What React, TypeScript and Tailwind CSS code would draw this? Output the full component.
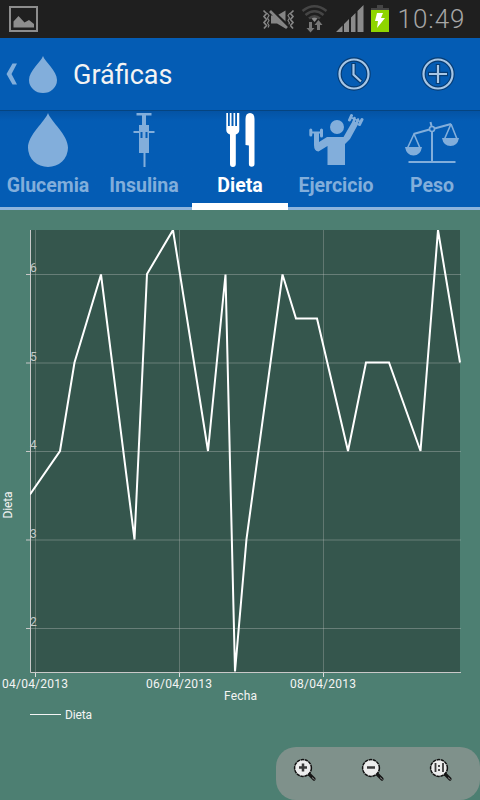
const DROP = "M20 0 C17 9 0 22 0 35.5 A20 19.5 0 0 0 40 35.5 C40 22 23 9 20 0Z";

function Drop({ className }: { className: string }) {
  return (
    <svg viewBox="0 0 40 55" preserveAspectRatio="none" className={className} fill="#82aedb">
      <path d={DROP} />
    </svg>
  );
}

function StatusBar() {
  return (
    <div className="flex h-[38px] shrink-0 items-center bg-[#1f1f1f]">
      <svg width="480" height="38" viewBox="0 0 480 38">
        <rect x="10" y="7" width="27" height="24" fill="none" stroke="#8d8d8d" strokeWidth="2" />
        <path d="M13.500 27.500V21.500L18.500 16L24.500 22.500L29 20L34 24V27.500Z" fill="#8d8d8d" />
        {/* vibrate */}
        <g fill="none" stroke="#858585" strokeWidth="1.700">
          <path d="M263.500 10.500l3 3-2.500 3 2.500 3-2.500 3 2.500 3-2.500 3M293.500 10.500l-3 3 2.500 3-2.500 3 2.500 3-2.500 3 2.500 3" />
          <path d="M267 13l2 2.500-1.500 2.500 1.500 2.500-1.500 2.500 1.500 2.500-1 2M290 13l-2 2.500 1.500 2.500-1.500 2.500 1.500 2.500-1.500 2.500 1 2" strokeWidth="1.200" />
        </g>
        <path d="M271 15.500h6l8.500-5v18l-8.500-5h-6z" fill="#858585" />
        <path d="M270 9.500L289 27.500" stroke="#1f1f1f" strokeWidth="4" />
        <path d="M270 11L287 28" stroke="#858585" strokeWidth="2.600" />
        {/* wifi */}
        <g fill="none" stroke="#454545" strokeWidth="2.600">
          <path d="M302.500 11Q314.500 1.500 326.500 11M305.500 15Q314.500 7.500 323.500 15" />
          <path d="M309 18.500Q314.500 14 320 18.500" />
        </g>
        <path d="M311.500 18.500Q314.500 16.500 317.500 18.500L314.500 22z" fill="#8b8b8b" />
        <path d="M309 22h3v6h2.500l-4 4.500-4-4.500H309zM317 30V25h-2.500l4-5 4 5H320v5z" fill="#777" />
        {/* signal */}
        <path d="M336 32L342.500 25.500V32zM344 32V24L349 19V32zM351 32V17.500L355.500 13V32zM357.500 32V11L363.500 5V32z" fill="#8b8b8b" />
        <rect x="377" y="5" width="6" height="3" fill="#454545" />
        <rect x="371" y="8" width="18" height="2" fill="#454545" />
        <rect x="371" y="10" width="18" height="22" fill="#8fd500" />
        <path d="M377 13h6l-2 5h4l-8 10 1-7h-3z" fill="#fff" />
        <text x="397.500" y="27.500" fontSize="26" textLength="67" fill="#a6a6a6" fontFamily="Roboto, sans-serif" fontWeight="300">10:49</text>
      </svg>
    </div>
  );
}

function ActionBar() {
  return (
    <header className="flex h-[72px] shrink-0 items-center bg-[#045cb4] pl-1.5">
      <svg width="12" height="24" viewBox="0 0 12 24" fill="#82aedb">
        <path d="M6.500 1.500h4.500L5.500 12l5.500 10.500H6.500L.5 12z" />
      </svg>
      <Drop className="ml-[11px] h-[37px] w-7" />
      <h1 className="ml-4 w-[101px] pt-0.5 text-[27px] leading-none text-[#f3f3f3]">Gráficas</h1>
      <svg width="34" height="34" viewBox="0 0 34 34" fill="none" className="ml-[163px]">
        <g stroke="#073c73" strokeWidth="4.500">
          <circle cx="17" cy="17" r="14.500" />
          <path d="M16.500 6v12l8 7" />
        </g>
        <g stroke="#a6c6e6" strokeWidth="2.200">
          <circle cx="17" cy="17" r="14.500" />
          <path d="M16.500 7v10.500l7.500 7" />
        </g>
      </svg>
      <svg width="34" height="34" viewBox="0 0 34 34" fill="none" className="ml-[50px]">
        <g stroke="#073c73" strokeWidth="4.500">
          <circle cx="17" cy="17" r="14.500" />
          <path d="M17 7v20M7 17h20" />
        </g>
        <g stroke="#a6c6e6" strokeWidth="2.200">
          <circle cx="17" cy="17" r="14.500" />
          <path d="M17 8v18M8 17h18" />
        </g>
      </svg>
    </header>
  );
}

function Syringe() {
  return (
    <svg width="22" height="54" viewBox="0 0 22 54" fill="#82aedb">
      <path fillRule="evenodd" d="M3.500 0h15v2.500H13V12h3v6h5.500v2H16v20h-3.500v14h-2V40H6V20H.5v-2H6v-6h3V2.500H3.500zM7.500 19v6h2v-6zM12.500 19v6h2v-6z" />
    </svg>
  );
}

function Cutlery() {
  return (
    <svg width="29" height="54" viewBox="0 0 29 54" fill="#fff">
      <path d="M.3 0H2v13h1.800V0h1.700v13h2V0h1.700v13H11V0h2.300v17q0 3-3.500 4.500V51a2.900 2.900 0 0 1-5.800 0V21.500Q.3 20 .3 17z" />
      <path d="M19.500 32V6Q19.500 0 24 0T28.500 6V51a2.800 2.800 0 0 1-5.600 0V32.500z" />
    </svg>
  );
}

function Lifter() {
  return (
    <svg width="55" height="54" viewBox="0 0 55 54" fill="#82aedb">
      <circle cx="28" cy="14" r="7" />
      <path d="M18.500 52V33L9.500 38.500Q5 38 5 32V20H10V29L18 24H34.500L44 7.500 49.500 10.500 41 26 36 31V52z" />
      <g fill="none" stroke="#82aedb" strokeLinecap="round">
        <path d="M1.800 17v5M12.500 17v6M42.500 2.500l-2 4.500M53 6.500l-2.500 5" strokeWidth="3" />
        <path d="M2 19.500h10M42 4.500l10 4.500" strokeWidth="1.800" />
        <path d="M45.500 5l-1 5M49 6.500l-1.500 4" strokeWidth="2.500" />
      </g>
    </svg>
  );
}

function Scales() {
  return (
    <svg width="54" height="48" viewBox="0 0 54 48" fill="none" stroke="#82aedb" strokeWidth="1.600">
      <path d="M3.500 46h47M27 15v30" strokeWidth="2" />
      <path d="M8.500 18L24.500 13.500M29.500 12.500L46 8M25.500 6l1 4" strokeWidth="2" />
      <circle cx="27" cy="13" r="2.500" />
      <path d="M9 18L2.500 32M9 18l6 14M46 8l-6.500 15M46 8l6 15" />
      <path d="M0 31h17q-1.500 8.500-8.500 8.500T0 31zM37 22h17q-1.500 8-8.500 8T37 22z" fill="#82aedb" stroke="none" />
    </svg>
  );
}

const tabs = [
  { label: "Glucemia", icon: <Drop className="h-[54px] w-10" /> },
  { label: "Insulina", icon: <Syringe /> },
  { label: "Dieta", icon: <Cutlery />, active: true },
  { label: "Ejercicio", icon: <Lifter /> },
  { label: "Peso", icon: <Scales /> },
];

function Tabs() {
  return (
    <nav className="grid h-[100px] shrink-0 grid-cols-5 border-t border-[#054480] bg-linear-to-b from-[#0453a4] to-[#045cb4] to-10%">
      {tabs.map((tab) => (
        <div
          key={tab.label}
          className={
            tab.active
              ? "flex flex-col items-center border-b-[7px] border-white pt-0.5 text-white"
              : "flex flex-col items-center border-b-[3px] border-[#8db4dd] pt-0.5 text-[#82aedb]"
          }
        >
          <div className="flex h-[54px] items-center justify-center">{tab.icon}</div>
          <span className="mt-[7px] text-[19.5px] leading-6 font-bold">{tab.label}</span>
        </div>
      ))}
    </nav>
  );
}

const series =
  "30,494.500 60,451 74.500,362.500 101,274.500 134.500,539.500 147,274 173,230 208,451 225.500,274.500 235,671.500 246.500,539 282.500,274.500 296,318.500 317,318.500 348,451 366,362.500 389,362.500 420.500,451 438,230 460,362.500";

const yTicks = [
  { y: 274.5, label: "6" },
  { y: 363, label: "5" },
  { y: 451.5, label: "4" },
  { y: 540, label: "3" },
  { y: 628.5, label: "2" },
];

const xTicks = [
  { x: 35.5, label: "04/04/2013" },
  { x: 179.5, label: "06/04/2013" },
  { x: 323.5, label: "08/04/2013" },
];

function Chart() {
  return (
    <svg width="480" height="530" viewBox="0 210 480 530" className="block" fontFamily="Roboto, sans-serif" fontSize="12">
      <rect x="30" y="230" width="430" height="442" fill="#35564d" />
      {yTicks.map((t) => (
        <g key={t.label}>
          <path d={`M30 ${t.y}H461`} stroke="#c8c8c8" strokeOpacity="0.350" />
          <path d={`M26 ${t.y}H30`} stroke="#c8c8c8" />
          <text x="30" y={t.y - 2.5} fill="#c3c9c7">{t.label}</text>
        </g>
      ))}
      {xTicks.map((t) => (
        <g key={t.label}>
          <path d={`M${t.x} 230V672`} stroke="#c8c8c8" strokeOpacity="0.300" />
          <path d={`M${t.x} 672V677`} stroke="#dddddd" />
          <text x={t.x - 0.5} y="688" textAnchor="middle" textLength="66" fill="#f4f4f4">{t.label}</text>
        </g>
      ))}
      <path d="M30.500 230V672.500H461" stroke="#c9c9c9" fill="none" />
      <svg x="30" y="230" width="431" height="442" viewBox="30 230 431 442">
        <polyline points={series} fill="none" stroke="#fff" strokeWidth="2" />
      </svg>
      <text x="240.500" y="700" textAnchor="middle" textLength="33" fill="#f4f4f4">Fecha</text>
      <text transform="translate(12 505) rotate(-90)" textAnchor="middle" textLength="27" fill="#f4f4f4">Dieta</text>
      <path d="M30 714.500H61" stroke="#f4f4f4" />
      <text x="65" y="719" textLength="27" fill="#f4f4f4">Dieta</text>
    </svg>
  );
}

function ZoomIcon({ kind }: { kind: "in" | "out" | "fit" }) {
  return (
    <svg width="24" height="24" viewBox="0 0 24 24" fill="none">
      <path d="M16 16l5 5" stroke="#161616" strokeWidth="3.200" strokeLinecap="round" />
      <path d="M19 19.500l2.500 2" stroke="#8a8a8a" strokeWidth="1" />
      <circle cx="10" cy="10" r="8.400" fill="#ededed" stroke="#111" strokeWidth="1.500" strokeDasharray="3.500 0.600" />
      {kind === "in" && <path d="M10 5.500v8M6 9.500h8" stroke="#3a3a3a" strokeWidth="2.500" />}
      {kind === "out" && <path d="M6 9.500h8" stroke="#3a3a3a" strokeWidth="2.500" />}
      {kind === "fit" && <path d="M6.500 5v9M14 5v9M10 7v2M10 11v2" stroke="#3a3a3a" strokeWidth="1.800" />}
    </svg>
  );
}

export default function App() {
  return (
    <div className="flex h-[800px] w-[480px] flex-col overflow-hidden bg-[#4d7f72] font-['Roboto',sans-serif]">
      <StatusBar />
      <ActionBar />
      <Tabs />
      <Chart />
      <div className="mt-[7px] ml-[276px] flex h-[53px] w-[204px] shrink-0 rounded-[20px] bg-[#7f918b]">
        <div className="flex-1 pt-[11px] pl-[17px]"><ZoomIcon kind="in" /></div>
        <div className="flex-1 pt-[11px] pl-[17px]"><ZoomIcon kind="out" /></div>
        <div className="flex-1 pt-[11px] pl-[17px]"><ZoomIcon kind="fit" /></div>
      </div>
    </div>
  );
}
